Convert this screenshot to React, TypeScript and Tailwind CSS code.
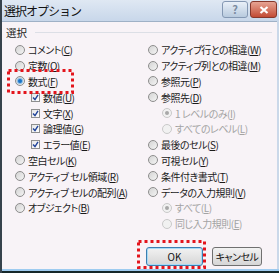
import React from 'react'

type Item = {
  label: string
  key: string
  kind?: 'radio' | 'check'
  checked?: boolean
  disabled?: boolean
  indent?: boolean
}

const left: Item[] = [
  { label: 'コメント', key: 'C' },
  { label: '定数', key: 'O' },
  { label: '数式', key: 'F', checked: true },
  { label: '数値', key: 'U', kind: 'check', checked: true, indent: true },
  { label: '文字', key: 'X', kind: 'check', checked: true, indent: true },
  { label: '論理値', key: 'G', kind: 'check', checked: true, indent: true },
  { label: 'エラー値', key: 'E', kind: 'check', checked: true, indent: true },
  { label: '空白セル', key: 'K' },
  { label: 'アクティブ セル領域', key: 'R' },
  { label: 'アクティブ セルの配列', key: 'A' },
  { label: 'オブジェクト', key: 'B' },
]

const right: Item[] = [
  { label: 'アクティブ行との相違', key: 'W' },
  { label: 'アクティブ列との相違', key: 'M' },
  { label: '参照元', key: 'P' },
  { label: '参照先', key: 'D' },
  { label: '1 レベルのみ', key: 'I', checked: true, disabled: true, indent: true },
  { label: 'すべてのレベル', key: 'L', disabled: true, indent: true },
  { label: '最後のセル', key: 'S' },
  { label: '可視セル', key: 'Y' },
  { label: '条件付き書式', key: 'T' },
  { label: 'データの入力規則', key: 'V' },
  { label: 'すべて', key: 'L', checked: true, disabled: true, indent: true },
  { label: '同じ入力規則', key: 'E', disabled: true, indent: true },
]

function Radio({ checked, disabled }: { checked?: boolean; disabled?: boolean }) {
  return (
    <span
      className={
        'flex h-[10px] w-[10px] shrink-0 items-center justify-center rounded-full border ' +
        (disabled
          ? 'border-[#c9c9c9] bg-[#f1f1f1]'
          : 'border-[#8d8d8d] bg-gradient-to-br from-[#d4d4d4] to-[#f4f4f4]')
      }
    >
      {checked && (
        <span
          className={
            'h-[4px] w-[4px] rounded-full ' +
            (disabled ? 'bg-[#a8a8a8]' : 'bg-[#1a73c7] shadow-[0_0_1px_1px_#7fb7e6]')
          }
        />
      )}
    </span>
  )
}

function Check({ checked }: { checked?: boolean }) {
  return (
    <span className="flex h-[9px] w-[9px] shrink-0 items-center justify-center border border-[#8e8f8f] bg-gradient-to-br from-[#e6e6e6] to-white">
      {checked && (
        <svg width="7" height="7" viewBox="0 0 7 7">
          <path d="M1 3.5 L3 5.6 L6 0.8" fill="none" stroke="#21449a" strokeWidth="1.4" />
        </svg>
      )}
    </span>
  )
}

function Row({ item, indentClass }: { item: Item; indentClass: string }) {
  return (
    <div className={'flex h-[15.8px] items-center ' + (item.indent ? indentClass : '')}>
      {item.kind === 'check' ? (
        <Check checked={item.checked} />
      ) : (
        <Radio checked={item.checked} disabled={item.disabled} />
      )}
      <span
        className={
          'ml-[3px] whitespace-nowrap tracking-[-0.5px] [font-feature-settings:"palt"] ' +
          (item.disabled ? 'text-[#a3a3a3]' : 'text-[#1b1b1b]')
        }
      >
        {item.label}(<span className="underline underline-offset-1">{item.key}</span>)
      </span>
    </div>
  )
}

function Marker({ className }: { className: string }) {
  return (
    <svg className={'pointer-events-none absolute ' + className} preserveAspectRatio="none">
      <rect
        x="1.5"
        y="1.5"
        width="calc(100% - 3px)"
        height="calc(100% - 3px)"
        fill="none"
        stroke="#e3141c"
        strokeWidth="3"
        strokeDasharray="3 3"
      />
    </svg>
  )
}

export default function App() {
  return (
    <div className="relative flex h-[273px] w-[279px] flex-col border-l-2 border-[#36424c] bg-[#cad8e9] font-['Noto_Sans_CJK_JP',sans-serif] text-[10px]">
      <div className="flex h-[21px] items-start justify-between bg-gradient-to-b from-[#dfe8f3] to-[#c8d7ea] pl-[2px] pr-[2px]">
        <span className="mt-[4px] text-[12px] leading-[14px] tracking-[-1px] text-[#111]">選択オプション</span>
        <div className="mt-[1px] flex gap-[2px]">
          <div className="flex h-[17px] w-[26px] items-center justify-center rounded-[3px] border border-[#8498b3] bg-gradient-to-b from-[#e9f0f8] to-[#b8cade] text-[11px] font-bold leading-none text-[#7b8ba0]">
            ?
          </div>
          <div className="flex h-[17px] w-[27px] items-center justify-center rounded-[3px] border border-[#86382c] bg-gradient-to-b from-[#e6a393] to-[#c24a34]">
            <svg width="10" height="8" viewBox="0 0 10 8">
              <path d="M1.5 1 L8.5 7 M8.5 1 L1.5 7" stroke="white" strokeWidth="2.2" />
            </svg>
          </div>
        </div>
      </div>

      <div className="mr-[2px] flex flex-1 flex-col border-t border-[#9fb1c6] bg-[#f8f3f7] pt-[3px]">
        <div className="flex h-[15px] items-center pl-[4px] pr-[5px]">
          <span className="text-[10.5px] text-[#1b1b1b]">選択</span>
          <div className="ml-[8px] h-px flex-1 bg-[#dcdfe6]" />
        </div>

        <div className="mt-[2px] grid grid-cols-[133px_1fr] pl-[13px]">
          <div className="flex flex-col">
            {left.map((item) => (
              <Row key={item.label} item={item} indentClass="pl-[16px]" />
            ))}
          </div>
          <div className="flex flex-col">
            {right.map((item) => (
              <Row key={item.label} item={item} indentClass="pl-[14px]" />
            ))}
          </div>
        </div>

        <div className="mt-auto mb-[3px] flex justify-end gap-[9px] pr-[15px]">
          <button className="h-[19px] w-[57px] rounded-[3px] border border-[#3c7fb1] bg-gradient-to-b from-[#f2f2f2] to-[#d6d6d6] text-[10px] leading-none text-[#111] shadow-[inset_0_0_0_1px_#a9dbf6]">
            OK
          </button>
          <button className="h-[19px] w-[50px] rounded-[3px] border border-[#707070] bg-gradient-to-b from-[#f2f2f2] to-[#d6d6d6] text-[10px] leading-none tracking-[-0.5px] text-[#111] [font-feature-settings:'palt']">
            キャンセル
          </button>
        </div>
      </div>
      <div className="h-[2px] bg-[#9ecbf0]" />
      <div className="h-[2px] bg-[#15282a]" />

      <Marker className="left-[5px] top-[69px] h-[25px] w-[67px]" />
      <Marker className="left-[135px] top-[240px] h-[29px] w-[69px]" />
    </div>
  )
}
